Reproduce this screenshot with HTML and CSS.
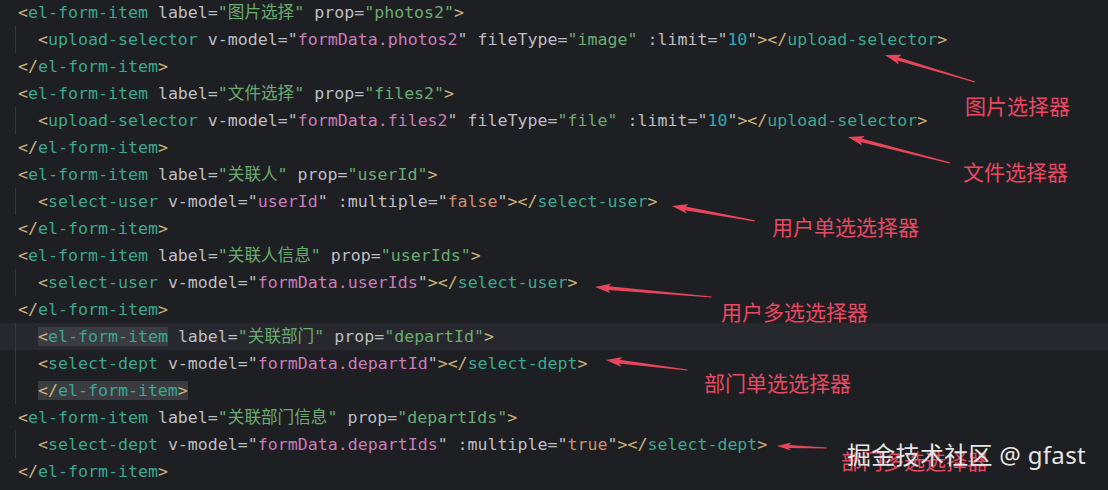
FILE: index.html
```html
<!DOCTYPE html>
<html lang="zh-CN">
<head>
    <meta charset="UTF-8">
    <meta name="viewport" content="width=device-width, initial-scale=1.0">
    <title>表单选择器示例</title>
    <link rel="stylesheet" href="styles.css">
</head>
<body>
    <div class="editor">
        <div class="line"><span class="b">&lt;</span><span class="t">el-form-item</span> <span class="a">label</span>=<span class="s">"图片选择"</span> <span class="a">prop</span>=<span class="s">"photos2"</span><span class="b">&gt;</span></div>
        <div class="line ind">  <span class="b">&lt;</span><span class="t">upload-selector</span> v-model="<span class="e">formData.photos2</span>" fileType=<span class="s">"image"</span> :limit="<span class="n">10</span>"<span class="b">&gt;&lt;/</span><span class="t">upload-selector</span><span class="b">&gt;</span></div>
        <div class="line"><span class="b">&lt;/</span><span class="t">el-form-item</span><span class="b">&gt;</span></div>
        <div class="line"><span class="b">&lt;</span><span class="t">el-form-item</span> <span class="a">label</span>=<span class="s">"文件选择"</span> <span class="a">prop</span>=<span class="s">"files2"</span><span class="b">&gt;</span></div>
        <div class="line ind">  <span class="b">&lt;</span><span class="t">upload-selector</span> v-model="<span class="e">formData.files2</span>" fileType=<span class="s">"file"</span> :limit="<span class="n">10</span>"<span class="b">&gt;&lt;/</span><span class="t">upload-selector</span><span class="b">&gt;</span></div>
        <div class="line"><span class="b">&lt;/</span><span class="t">el-form-item</span><span class="b">&gt;</span></div>
        <div class="line"><span class="b">&lt;</span><span class="t">el-form-item</span> <span class="a">label</span>=<span class="s">"关联人"</span> <span class="a">prop</span>=<span class="s">"userId"</span><span class="b">&gt;</span></div>
        <div class="line ind">  <span class="b">&lt;</span><span class="t">select-user</span> v-model="<span class="e">userId</span>" :multiple="<span class="k">false</span>"<span class="b">&gt;&lt;/</span><span class="t">select-user</span><span class="b">&gt;</span></div>
        <div class="line"><span class="b">&lt;/</span><span class="t">el-form-item</span><span class="b">&gt;</span></div>
        <div class="line"><span class="b">&lt;</span><span class="t">el-form-item</span> <span class="a">label</span>=<span class="s">"关联人信息"</span> <span class="a">prop</span>=<span class="s">"userIds"</span><span class="b">&gt;</span></div>
        <div class="line ind">  <span class="b">&lt;</span><span class="t">select-user</span> v-model="<span class="e">formData.userIds</span>"<span class="b">&gt;&lt;/</span><span class="t">select-user</span><span class="b">&gt;</span></div>
        <div class="line"><span class="b">&lt;/</span><span class="t">el-form-item</span><span class="b">&gt;</span></div>
        <div class="line ind cur">  <span class="hl"><span class="b">&lt;</span><span class="t">el-form-item</span></span> <span class="a">label</span>=<span class="s">"关联部门"</span> <span class="a">prop</span>=<span class="s">"departId"</span><span class="b">&gt;</span></div>
        <div class="line ind">  <span class="b">&lt;</span><span class="t">select-dept</span> v-model="<span class="e">formData.departId</span>"<span class="b">&gt;&lt;/</span><span class="t">select-dept</span><span class="b">&gt;</span></div>
        <div class="line ind">  <span class="hl"><span class="b">&lt;/</span><span class="t">el-form-item</span><span class="b">&gt;</span></span></div>
        <div class="line"><span class="b">&lt;</span><span class="t">el-form-item</span> <span class="a">label</span>=<span class="s">"关联部门信息"</span> <span class="a">prop</span>=<span class="s">"departIds"</span><span class="b">&gt;</span></div>
        <div class="line ind">  <span class="b">&lt;</span><span class="t">select-dept</span> v-model="<span class="e">formData.departIds</span>" :multiple="<span class="k">true</span>"<span class="b">&gt;&lt;/</span><span class="t">select-dept</span><span class="b">&gt;</span></div>
        <div class="line"><span class="b">&lt;/</span><span class="t">el-form-item</span><span class="b">&gt;</span></div>
    </div>

    <!-- 标注箭头 -->
    <svg class="arrows" width="1108" height="490" viewBox="0 0 1108 490">
        <polygon transform="translate(885 55) rotate(16.7)" points="0,0 16,-5 13.5,-1.8 94,-0.6 94,0.6 13.5,1.8 16,5"/>
        <polygon transform="translate(848 137) rotate(14.3)" points="0,0 16,-5 13.5,-1.8 105,-0.6 105,0.6 13.5,1.8 16,5"/>
        <polygon transform="translate(672 206) rotate(10.2)" points="0,0 16,-5 13.5,-1.8 84,-0.6 84,0.6 13.5,1.8 16,5"/>
        <polygon transform="translate(595 287) rotate(4.9)" points="0,0 16,-5 13.5,-1.8 117,-0.6 117,0.6 13.5,1.8 16,5"/>
        <polygon transform="translate(606 360) rotate(7)" points="0,0 16,-5 13.5,-1.8 82,-0.6 82,0.6 13.5,1.8 16,5"/>
        <polygon transform="translate(777 446) rotate(2.3)" points="0,0 14,-4 12,-1.5 50,-0.6 50,0.6 12,1.5 14,4"/>
    </svg>

    <div class="note n1">图片选择器</div>
    <div class="note n2">文件选择器</div>
    <div class="note n3">用户单选选择器</div>
    <div class="note n4">用户多选选择器</div>
    <div class="note n5">部门单选选择器</div>
    <div class="note n6">部门多选选择器</div>

    <div class="watermark">掘金技术社区 @ gfast</div>
</body>
</html>
```

FILE: styles.css
```css
body {
    margin: 0;
    width: 1108px;
    height: 490px;
    overflow: hidden;
    position: relative;
    background-color: #1e1f22;
}

.editor {
    margin-top: -1px;
    font-family: "DejaVu Sans Mono", "Noto Sans CJK SC", monospace;
    font-size: 16.6px;
    line-height: 27px;
    color: #bcbec4;
}

.line {
    height: 27px;
    padding-left: 18px;
    white-space: pre;
}

.line.ind {
    background-image: linear-gradient(#35373b, #35373b);
    background-size: 1px 100%;
    background-position: 15px 0;
    background-repeat: no-repeat;
}

.line.cur {
    background-color: #26282d;
}

.hl {
    background-color: #3a3c41;
}

.b { color: #cdb27a; }
.t { color: #3aa88f; }
.a { color: #bcbec4; }
.s { color: #6aab73; }
.e { color: #c77dbb; }
.n { color: #2aacb8; }
.k { color: #cf8e6d; }

.arrows {
    position: absolute;
    top: 0;
    left: 0;
    fill: #e8455d;
    pointer-events: none;
}

.note {
    position: absolute;
    font-family: "Noto Sans CJK SC", sans-serif;
    font-size: 21px;
    line-height: 1;
    color: #ea4862;
    white-space: nowrap;
}

.n1 { left: 965px; top: 95px; }
.n2 { left: 963px; top: 161px; }
.n3 { left: 772px; top: 216px; }
.n4 { left: 721px; top: 301px; }
.n5 { left: 704px; top: 372px; }
.n6 { left: 841px; top: 450px; }

/* 水印盖在最后一条标注上，和原图一致 */
.watermark {
    position: absolute;
    left: 847px;
    top: 443px;
    font-family: "Noto Sans", "Noto Sans CJK SC", sans-serif;
    font-size: 24px;
    line-height: 1;
    letter-spacing: 0.3px;
    color: #e6e6e6;
    white-space: nowrap;
}
```
